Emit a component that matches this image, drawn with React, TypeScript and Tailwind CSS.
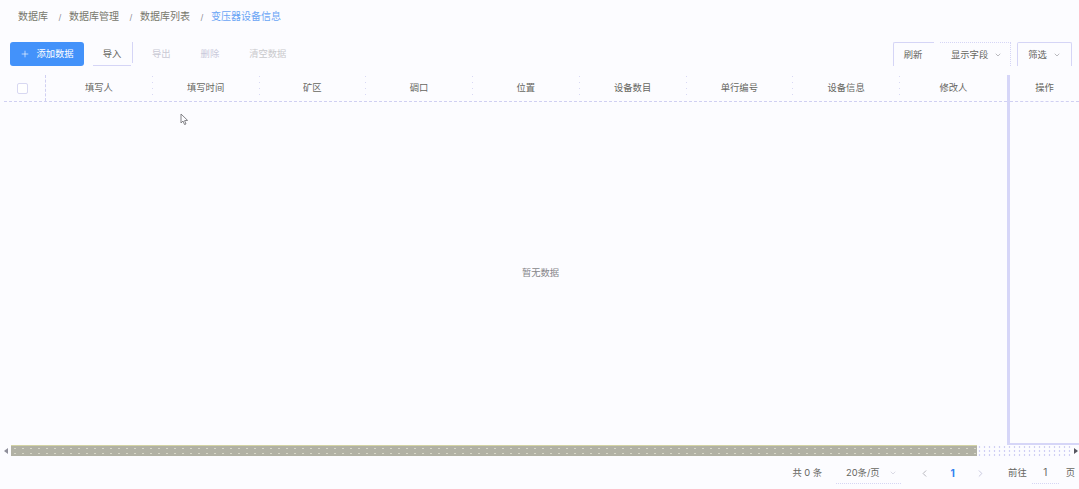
import { ChevronDown, ChevronLeft, ChevronRight, Plus } from "lucide-react";

const cols = ["填写人", "填写时间", "矿区", "碉口", "位置", "设备数目", "单行编号", "设备信息", "修改人"];
const crumbs = ["数据库", "数据库管理", "数据库列表"];

function Cursor() {
  return (
    <svg width="9" height="13" viewBox="0 0 9 13" className="absolute left-[180px] top-[11px]">
      <path d="M1 1 L1 10 L3 8 L4.5 11.5 L6 11 L4.6 7.6 L7.6 7.4 Z" fill="#fcfcff" stroke="#77777c" strokeWidth="0.9" />
    </svg>
  );
}

export default function App() {
  return (
    <div className="w-[1079px] h-[489px] overflow-hidden flex flex-col bg-[#fcfcff] text-[9.3px] text-[#66665f] font-['Inter','Noto_Sans_CJK_SC',sans-serif]">
      <nav className="h-[32px] pl-[18px] flex items-center text-[10px] text-[#77776c]">
        {crumbs.map((c) => (
          <span key={c} className="flex items-center">
            <span>{c}</span>
            <span className="w-[21px] pl-[3px] text-center text-[8px] text-[#888890] pt-[2px]">/</span>
          </span>
        ))}
        <span className="text-[#6aa5f5]">变压器设备信息</span>
      </nav>

      <div className="h-[24px] mt-[10px] pl-[10px] pr-[7px] flex items-center">
        <button className="w-[74px] h-[24px] rounded-[3px] bg-[#4392fa] text-white flex items-center justify-center gap-[6px]">
          <Plus size={10} strokeWidth={1.5} />
          <span>添加数据</span>
        </button>
        <button className="w-[38px] ml-[9px] h-[24px] border-b border-[#d5d5f6]">导入</button>
        <div className="w-px h-[21px] mb-[3px] ml-[1px] bg-[#d5d5f6]" />
        <button className="ml-[19px] text-[#c9c9d4]">导出</button>
        <button className="ml-[30px] text-[#c9c9da]">删除</button>
        <button className="ml-[30px] text-[#c9c9cc]">清空数据</button>
        <div className="ml-auto flex items-center">
          <button className="w-[41px] h-[24px] pr-[2px] border-t border-l border-[#d5d5f6] rounded-tl-[2px]">刷新</button>
          <button className="w-[71px] h-[24px] ml-[6px] pl-[11px] border-t border-r border-dotted border-[#d5d5f6] flex items-center gap-[6px]">
            <span>显示字段</span>
            <ChevronDown size={8} className="text-[#99999f]" />
          </button>
          <button className="w-[55px] h-[24px] ml-[6px] border-t border-l border-r border-[#d5d5f6] rounded-t-[2px] flex items-center justify-center gap-[6px]">
            <span>筛选</span>
            <ChevronDown size={8} className="text-[#99999f]" />
          </button>
        </div>
      </div>

      <div className="flex-1 min-h-0 mt-[9px] flex flex-col">
        <div className="flex-1 min-h-0 flex">
          <div className="flex-1 min-w-0 flex flex-col">
            <div className="h-[27px] ml-[4px] flex items-stretch border-b border-dashed border-[#d0d0f2]">
              <div className="w-[42px] shrink-0 flex items-center justify-center pr-[5px] border-r border-dashed border-[#d0d0f2] pt-[1px]">
                <div className="w-[11px] h-[11px] rounded-[2px] border border-[#d8d8f2] bg-white" />
              </div>
              {cols.map((c, i) => (
                <div key={c} className="w-[106.75px] shrink-0 flex items-stretch">
                  <div className="flex-1 flex items-center justify-center">{c}</div>
                  {i < cols.length - 1 && (
                    <div className="w-px my-[1px] bg-[repeating-linear-gradient(to_bottom,#d8d8f4_0,#d8d8f4_1px,transparent_1px,transparent_6px)]" />
                  )}
                </div>
              ))}
            </div>
            <div className="relative flex-1 flex items-center justify-center pl-[74px] pb-[2px] text-[#86868a]">
              <Cursor />
              <span>暂无数据</span>
            </div>
          </div>
          <div className="w-[72px] shrink-0 flex flex-col border-l-[3px] border-b-2 border-[#d6d6f8]">
            <div className="h-[27px] flex items-center justify-center border-b border-dashed border-[#d0d0f2]">操作</div>
          </div>
        </div>

        <div className="h-[11px] flex items-stretch">
          <div className="w-[11px] shrink-0 flex items-center justify-center">
            <div className="w-0 h-0 border-y-[3px] border-y-transparent border-r-[4px] border-r-[#8e8e9a]" />
          </div>
          <div className="w-[966px] shrink-0 border-t border-[#d3d3a4] bg-[#b1b1a4] bg-[radial-gradient(#d7d7c8_0.8px,transparent_1px)] bg-[length:8px_5px]" />
          <div className="flex-1 bg-[radial-gradient(#d0d0f4_1px,transparent_1.2px)] bg-[length:5px_4px]" />
          <div className="w-[7px] shrink-0 flex items-center justify-center">
            <div className="w-0 h-0 border-y-[3px] border-y-transparent border-l-[4px] border-l-[#555560]" />
          </div>
        </div>

        <footer className="h-[33px] pt-[1px] pr-[4px] flex items-center justify-end">
          <span>共 0 条</span>
          <div className="ml-[14px] w-[65px] h-[22px] flex items-center justify-between pl-[10px] pr-[4px] border-b border-dotted border-[#d6d6f4]">
            <span>20条/页</span>
            <ChevronDown size={8} className="text-[#c8c8d8]" />
          </div>
          <ChevronLeft size={11} className="ml-[18px] text-[#b0b0b8]" />
          <span className="w-[45px] text-center text-[10px] text-[#2f80f0] font-bold">1</span>
          <ChevronRight size={11} className="text-[#c4c4dc]" />
          <span className="ml-[22px]">前往</span>
          <div className="ml-[5px] w-[27px] h-[22px] flex items-center justify-center text-[10px] border-b border-dotted border-[#d6d6f4]">1</div>
          <span className="ml-[7px]">页</span>
        </footer>
      </div>
    </div>
  );
}
